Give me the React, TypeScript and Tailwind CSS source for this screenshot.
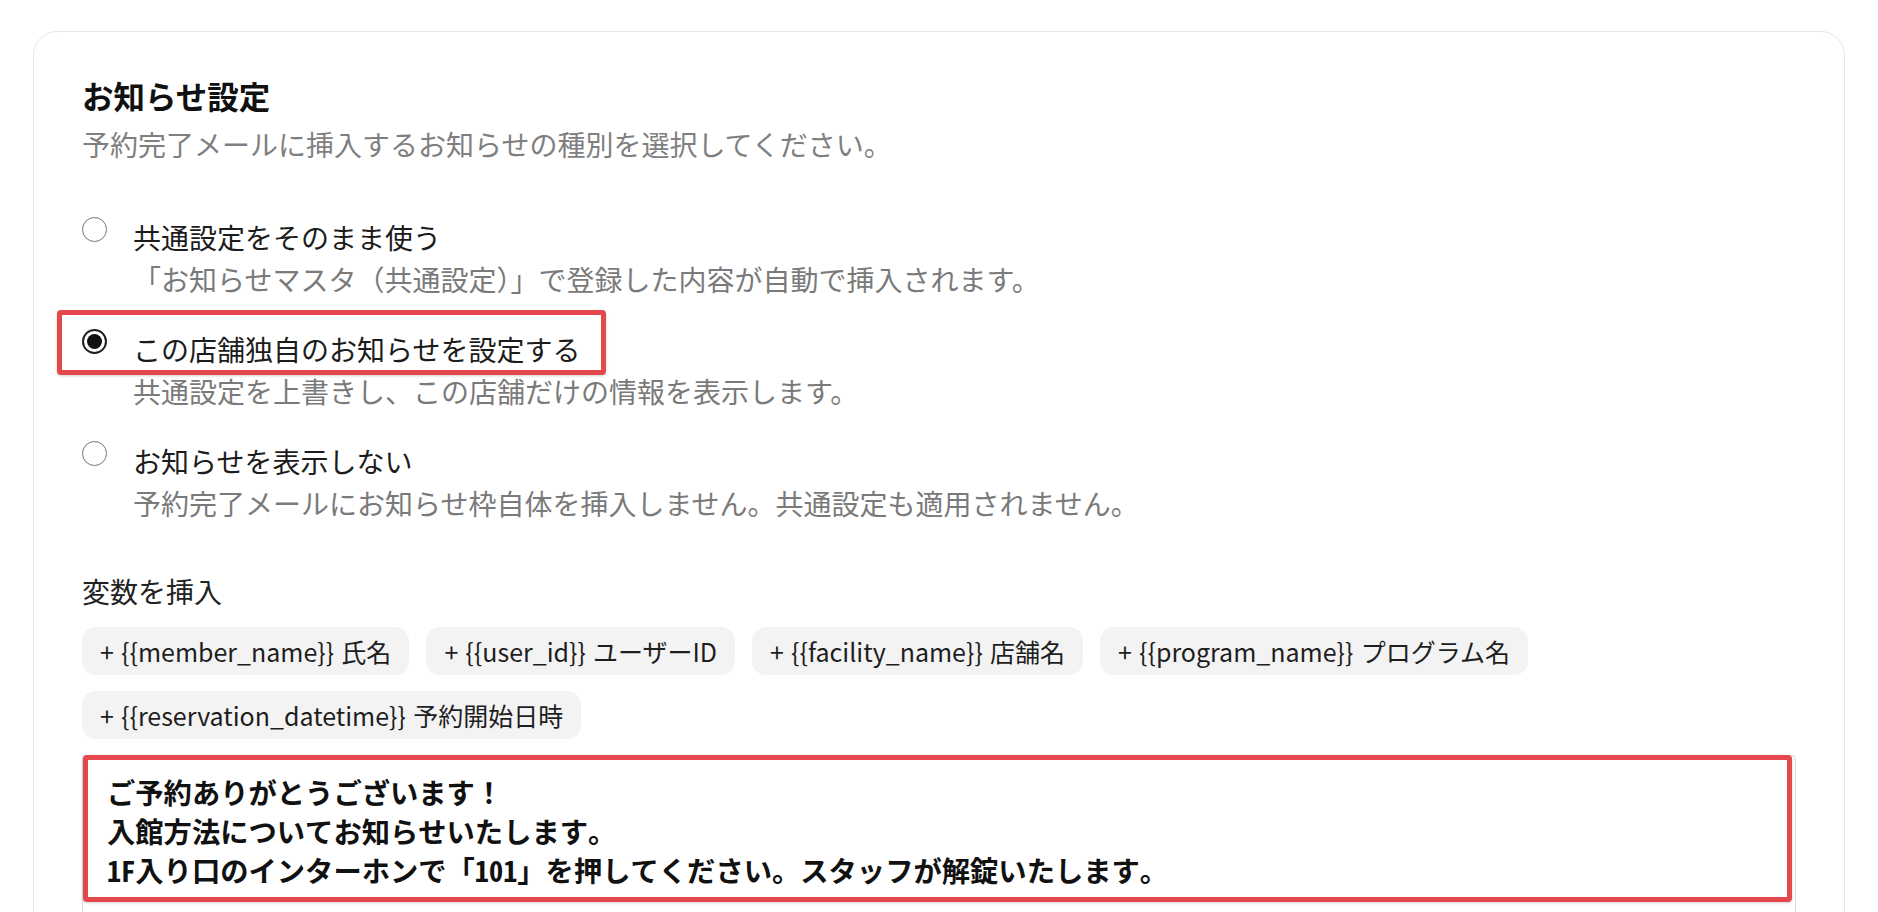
import React, { useState } from "react";

type Option = {
  id: string;
  label: string;
  description: string;
};

const OPTIONS: Option[] = [
  {
    id: "common",
    label: "共通設定をそのまま使う",
    description: "「お知らせマスタ（共通設定）」で登録した内容が自動で挿入されます。",
  },
  {
    id: "custom",
    label: "この店舗独自のお知らせを設定する",
    description: "共通設定を上書きし、この店舗だけの情報を表示します。",
  },
  {
    id: "none",
    label: "お知らせを表示しない",
    description: "予約完了メールにお知らせ枠自体を挿入しません。共通設定も適用されません。",
  },
];

const VARIABLES: { key: string; label: string }[] = [
  { key: "member_name", label: "氏名" },
  { key: "user_id", label: "ユーザーID" },
  { key: "facility_name", label: "店舗名" },
  { key: "program_name", label: "プログラム名" },
  { key: "reservation_datetime", label: "予約開始日時" },
];

const INITIAL_TEXT =
  "ご予約ありがとうございます！\n入館方法についてお知らせいたします。\n1F入り口のインターホンで「101」を押してください。スタッフが解錠いたします。\n";

function Radio({ checked }: { checked: boolean }) {
  if (checked) {
    return (
      <span className="mt-[1px] flex h-[25px] w-[25px] shrink-0 items-center justify-center rounded-full border-[2px] border-[#1f1f1f] bg-white">
        <span className="h-[15px] w-[15px] rounded-full bg-[#111111]" />
      </span>
    );
  }
  return (
    <span className="mt-[1px] h-[25px] w-[25px] shrink-0 rounded-full border-[1.75px] border-[#767676] bg-white" />
  );
}

export default function App() {
  const [selected, setSelected] = useState("custom");
  const [text, setText] = useState(INITIAL_TEXT);

  const insertVariable = (key: string) => {
    setText((t) => t + `{{${key}}}`);
  };

  return (
    <div
      className="min-h-screen bg-white px-[33px] pt-[31px] text-[#1c1c1c]"
      style={{ fontFamily: '"Noto Sans CJK JP", "Noto Sans", sans-serif' }}
    >
      <section className="rounded-[24px] border-[1.5px] border-[#e6e6e6] bg-white px-[48px] pt-[40px] pb-[48px]">
        <h2 className="text-[31.5px] font-bold leading-[1.5] text-[#111111]">お知らせ設定</h2>
        <p className="mt-[4px] text-[28px] leading-[1.5] text-[#7f7f7f]">
          予約完了メールに挿入するお知らせの種別を選択してください。
        </p>

        <div className="mt-[51px] flex flex-col gap-[28px]">
          {OPTIONS.map((opt) => (
            <div
              key={opt.id}
              className="relative flex cursor-pointer items-start gap-[26px]"
              onClick={() => setSelected(opt.id)}
            >
              {opt.id === "custom" && (
                <span className="pointer-events-none absolute left-[-25.5px] top-[-18px] h-[65px] w-[549px] rounded-[4px] border-[5.5px] border-[#e4484d] shadow-[0_1px_3px_rgba(0,0,0,0.18)]" />
              )}
              <Radio checked={selected === opt.id} />
              <div className="flex flex-col">
                <span className="text-[28px] leading-[42px] text-[#1c1c1c]">{opt.label}</span>
                <span className="text-[28px] leading-[42px] text-[#7a7a7a]">{opt.description}</span>
              </div>
            </div>
          ))}
        </div>

        <div className="mt-[46px] text-[28px] leading-[42px] text-[#222222]">変数を挿入</div>

        <div className="mt-[15px] flex flex-wrap gap-x-[17px] gap-y-[16px]">
          {VARIABLES.map((v) => (
            <button
              key={v.key}
              type="button"
              onClick={() => insertVariable(v.key)}
              className="flex h-[48px] items-center rounded-[14px] bg-[#f3f3f3] px-[18px] text-[25px] leading-none text-[#1e1e1e] [word-spacing:1.5px]"
            >
              + {`{{${v.key}}}`} {v.label}
            </button>
          ))}
        </div>

        <div className="relative mt-[16px]">
          <textarea
            value={text}
            onChange={(e) => setText(e.target.value)}
            rows={6}
            className="block h-[260px] w-full resize-none rounded-[4px] border-[1.5px] border-[#d9d9d9] bg-white px-[24px] pt-[16px] text-[28.3px] font-bold leading-[39px] text-[#111111] outline-none"
            style={{
              fontFamily:
                '"Noto Sans Mono CJK JP", "DejaVu Sans Mono", "Noto Sans CJK JP", monospace',
            }}
          />
          <span className="pointer-events-none absolute left-[1px] top-0 h-[147px] w-[1709px] rounded-[4px] border-[5.5px] border-[#e4484d] shadow-[0_1px_3px_rgba(0,0,0,0.18)]" />
        </div>
      </section>
    </div>
  );
}
